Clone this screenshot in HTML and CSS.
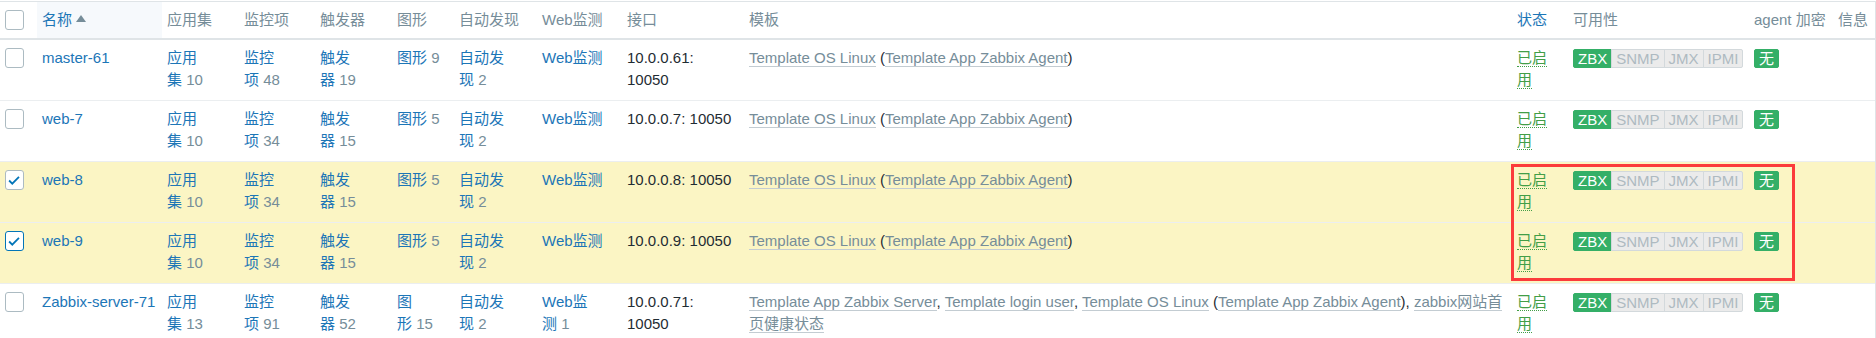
FILE: index.html
```html
<!DOCTYPE html>
<html lang="zh-CN">
<head>
    <meta charset="UTF-8">
    <title>主机</title>
    <link rel="stylesheet" href="styles.css">
</head>
<body>
    <div class="hosts">
        <table class="list">
            <colgroup>
                <col style="width: 37px">
                <col style="width: 125px">
                <col style="width: 77px">
                <col style="width: 76px">
                <col style="width: 77px">
                <col style="width: 62px">
                <col style="width: 83px">
                <col style="width: 85px">
                <col style="width: 122px">
                <col style="width: 768px">
                <col style="width: 56px">
                <col style="width: 181px">
                <col style="width: 84px">
                <col style="width: 42px">
            </colgroup>
            <thead>
                <tr>
                    <th><span class="check"></span></th>
                    <th class="sorted"><a class="link">名称</a><span class="arrow-up"></span></th>
                    <th>应用集</th>
                    <th>监控项</th>
                    <th>触发器</th>
                    <th>图形</th>
                    <th>自动发现</th>
                    <th>Web监测</th>
                    <th>接口</th>
                    <th>模板</th>
                    <th><a class="link">状态</a></th>
                    <th>可用性</th>
                    <th>agent 加密</th>
                    <th>信息</th>
                </tr>
            </thead>
            <tbody>
                <tr>
                    <td><span class="check"></span></td>
                    <td><a class="link">master-61</a></td>
                    <td><a class="link">应用集</a>&nbsp;<span class="count">10</span></td>
                    <td><a class="link">监控项</a>&nbsp;<span class="count">48</span></td>
                    <td><a class="link">触发器</a>&nbsp;<span class="count">19</span></td>
                    <td><a class="link">图形</a>&nbsp;<span class="count">9</span></td>
                    <td><a class="link">自动发现</a>&nbsp;<span class="count">2</span></td>
                    <td><a class="link">Web监测</a></td>
                    <td>10.0.0.61: 10050</td>
                    <td><a class="tpl">Template OS Linux</a> (<a class="tpl">Template App Zabbix Agent</a>)</td>
                    <td><a class="enabled">已启用</a></td>
                    <td>
                        <span class="avail"><span class="st on">ZBX</span><span class="st">SNMP</span><span class="st">JMX</span><span class="st">IPMI</span></span>
                    </td>
                    <td><span class="st on single">无</span></td>
                    <td></td>
                </tr>
                <tr>
                    <td><span class="check"></span></td>
                    <td><a class="link">web-7</a></td>
                    <td><a class="link">应用集</a>&nbsp;<span class="count">10</span></td>
                    <td><a class="link">监控项</a>&nbsp;<span class="count">34</span></td>
                    <td><a class="link">触发器</a>&nbsp;<span class="count">15</span></td>
                    <td><a class="link">图形</a>&nbsp;<span class="count">5</span></td>
                    <td><a class="link">自动发现</a>&nbsp;<span class="count">2</span></td>
                    <td><a class="link">Web监测</a></td>
                    <td>10.0.0.7: 10050</td>
                    <td><a class="tpl">Template OS Linux</a> (<a class="tpl">Template App Zabbix Agent</a>)</td>
                    <td><a class="enabled">已启用</a></td>
                    <td>
                        <span class="avail"><span class="st on">ZBX</span><span class="st">SNMP</span><span class="st">JMX</span><span class="st">IPMI</span></span>
                    </td>
                    <td><span class="st on single">无</span></td>
                    <td></td>
                </tr>
                <tr class="selected">
                    <td><span class="check checked"><svg viewBox="0 0 19 19" width="17" height="17"><path d="M3.5 9.5 L7 13 L14.5 5.5" fill="none" stroke="#0275b8" stroke-width="2"/></svg></span></td>
                    <td><a class="link">web-8</a></td>
                    <td><a class="link">应用集</a>&nbsp;<span class="count">10</span></td>
                    <td><a class="link">监控项</a>&nbsp;<span class="count">34</span></td>
                    <td><a class="link">触发器</a>&nbsp;<span class="count">15</span></td>
                    <td><a class="link">图形</a>&nbsp;<span class="count">5</span></td>
                    <td><a class="link">自动发现</a>&nbsp;<span class="count">2</span></td>
                    <td><a class="link">Web监测</a></td>
                    <td>10.0.0.8: 10050</td>
                    <td><a class="tpl">Template OS Linux</a> (<a class="tpl">Template App Zabbix Agent</a>)</td>
                    <td><a class="enabled">已启用</a></td>
                    <td>
                        <span class="avail"><span class="st on">ZBX</span><span class="st">SNMP</span><span class="st">JMX</span><span class="st">IPMI</span></span>
                    </td>
                    <td><span class="st on single">无</span></td>
                    <td></td>
                </tr>
                <tr class="selected">
                    <td><span class="check checked focus"><svg viewBox="0 0 19 19" width="17" height="17"><path d="M3.5 9.5 L7 13 L14.5 5.5" fill="none" stroke="#0275b8" stroke-width="2"/></svg></span></td>
                    <td><a class="link">web-9</a></td>
                    <td><a class="link">应用集</a>&nbsp;<span class="count">10</span></td>
                    <td><a class="link">监控项</a>&nbsp;<span class="count">34</span></td>
                    <td><a class="link">触发器</a>&nbsp;<span class="count">15</span></td>
                    <td><a class="link">图形</a>&nbsp;<span class="count">5</span></td>
                    <td><a class="link">自动发现</a>&nbsp;<span class="count">2</span></td>
                    <td><a class="link">Web监测</a></td>
                    <td>10.0.0.9: 10050</td>
                    <td><a class="tpl">Template OS Linux</a> (<a class="tpl">Template App Zabbix Agent</a>)</td>
                    <td><a class="enabled">已启用</a></td>
                    <td>
                        <span class="avail"><span class="st on">ZBX</span><span class="st">SNMP</span><span class="st">JMX</span><span class="st">IPMI</span></span>
                    </td>
                    <td><span class="st on single">无</span></td>
                    <td></td>
                </tr>
                <tr>
                    <td><span class="check"></span></td>
                    <td><a class="link">Zabbix-server-71</a></td>
                    <td><a class="link">应用集</a>&nbsp;<span class="count">13</span></td>
                    <td><a class="link">监控项</a>&nbsp;<span class="count">91</span></td>
                    <td><a class="link">触发器</a>&nbsp;<span class="count">52</span></td>
                    <td><a class="link">图形</a>&nbsp;<span class="count">15</span></td>
                    <td><a class="link">自动发现</a>&nbsp;<span class="count">2</span></td>
                    <td><a class="link">Web监测</a>&nbsp;<span class="count">1</span></td>
                    <td>10.0.0.71: 10050</td>
                    <td><a class="tpl">Template App Zabbix Server</a>, <a class="tpl">Template login user</a>, <a class="tpl">Template OS Linux</a> (<a class="tpl">Template App Zabbix Agent</a>), <a class="tpl">zabbix网站首页健康状态</a></td>
                    <td><a class="enabled">已启用</a></td>
                    <td>
                        <span class="avail"><span class="st on">ZBX</span><span class="st">SNMP</span><span class="st">JMX</span><span class="st">IPMI</span></span>
                    </td>
                    <td><span class="st on single">无</span></td>
                    <td></td>
                </tr>
            </tbody>
        </table>

        <!-- annotation box over the selected rows -->
        <div class="mark"></div>
    </div>
</body>
</html>
```

FILE: styles.css
```css
body {
    margin: 0;
    background: #fff;
    font-family: 'Liberation Sans', Arial, 'Noto Sans CJK SC', sans-serif;
    font-size: 15px;
    line-height: 22px;
    color: #1f2c33;
}
.hosts {
    position: relative;
    margin-top: 1px;
    border-top: 1px solid #dfe4e7;
    border-right: 1px solid #dfe4e7;
}
.list {
    width: 1875px;
    table-layout: fixed;
    border-collapse: collapse;
}
.list th {
    padding: 7px 5px;
    text-align: left;
    font-weight: normal;
    color: #768d99;
    white-space: nowrap;
    vertical-align: top;
    border-bottom: 2px solid #dfe4e7;
}
.list th.sorted {
    background: #f6f9fc;
}
.list td {
    padding: 7px 5px 9px 5px;
    vertical-align: top;
    border-bottom: 1px solid #ebeef0;
}
.list td:nth-child(3),
.list td:nth-child(4),
.list td:nth-child(5),
.list td:nth-child(7),
.list td:nth-child(8) {
    padding-right: 15px;
}
.list td:nth-child(6) {
    padding-right: 11px;
}
.list td:nth-child(9) {
    padding-right: 9px;
}
.list td:nth-child(10) {
    padding-right: 8px;
}
.list td:nth-child(11) {
    padding-right: 13px;
}
.list tr.selected td {
    background: #fbf5c4;
}
.link {
    color: #1c76b7;
    text-decoration: none;
}
.count {
    color: #768d99;
}
.arrow-up {
    display: inline-block;
    margin-left: 4px;
    vertical-align: 3px;
    border-left: 5px solid transparent;
    border-right: 5px solid transparent;
    border-bottom: 7px solid #768d99;
}
.check {
    display: inline-block;
    box-sizing: border-box;
    width: 19px;
    height: 20px;
    margin-top: 1px;
    vertical-align: top;
    background: #fff;
    border: 1px solid #acbbc2;
    border-radius: 3px;
}
.check svg {
    display: block;
    margin-top: 1px;
}
.check.focus {
    border-color: #0275b8;
}
.tpl {
    color: #768d99;
    text-decoration: none;
    border-bottom: 1px solid #c3ccd2;
}
.enabled {
    color: #429e47;
    text-decoration: none;
    border-bottom: 1px dotted #429e47;
}
.avail {
    display: inline-flex;
    vertical-align: top;
    margin-top: 2px;
}
.st {
    display: inline-block;
    padding: 0 4px;
    line-height: 17px;
    background: #ebebeb;
    color: #aebac1;
    border: 1px solid #d3d9dc;
    margin-left: -1px;
}
.st:first-child {
    margin-left: 0;
    border-radius: 2px 0 0 2px;
}
.st:last-child {
    border-radius: 0 2px 2px 0;
}
.st.on {
    background: #34af67;
    border-color: #34af67;
    color: #fff;
}
.st.single {
    vertical-align: top;
    margin-top: 2px;
    border-radius: 2px;
}
.mark {
    position: absolute;
    left: 1511px;
    top: 162px;
    width: 284px;
    height: 117px;
    box-sizing: border-box;
    border: 3px solid #fb3b3b;
}
```
